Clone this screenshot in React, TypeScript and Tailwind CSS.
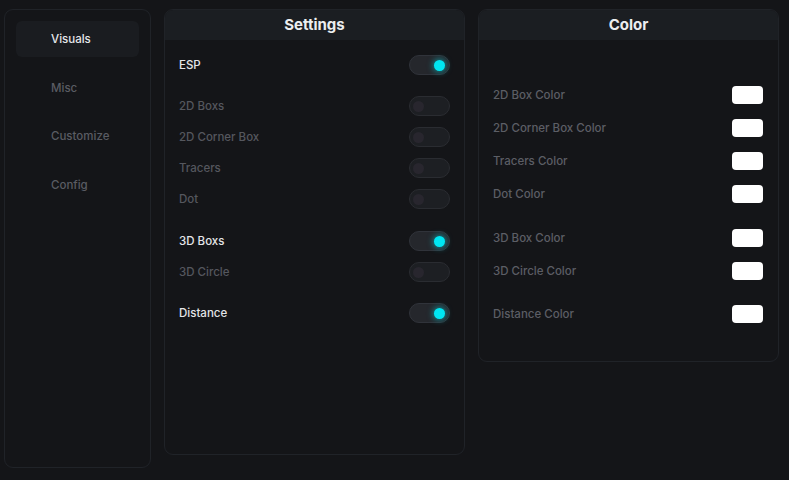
import React from "react";

const font = { fontFamily: "Inter, 'Noto Sans', sans-serif" };

function Toggle({ on }: { on: boolean }) {
  return (
    <div
      className={
        "relative w-[41px] h-[20px] rounded-full border " +
        (on ? "bg-[#25272c] border-[#30333a]" : "bg-[#1d1f23] border-[#2a2c31]")
      }
    >
      {on ? (
        <div className="absolute right-[4px] top-[4px] w-[11px] h-[11px] rounded-full bg-[#00e6f2] shadow-[0_0_6px_1px_rgba(0,230,242,0.55)]" />
      ) : (
        <div className="absolute left-[3px] top-[4px] w-[11px] h-[11px] rounded-full bg-[#28262e]" />
      )}
    </div>
  );
}

function SRow({ label, on }: { label: string; on: boolean }) {
  return (
    <div className="flex items-center justify-between h-[31px]">
      <span className={"text-[11.5px] font-medium leading-none pt-[2px] " + (on ? "text-[#e4e5e8]" : "text-[#55575e]")}>{label}</span>
      <Toggle on={on} />
    </div>
  );
}

function CRow({ label }: { label: string }) {
  return (
    <div className="flex items-center justify-between h-[33px]">
      <span className="text-[11.5px] font-medium leading-none pt-[2px] text-[#5c5e65]">{label}</span>
      <div className="w-[31px] h-[18px] rounded-[4px] bg-white" />
    </div>
  );
}

export default function App() {
  return (
    <div className="w-[789px] h-[480px] bg-[#141518] overflow-hidden" style={font}>
      <div className="flex items-start gap-[13px] pt-[9px] pl-[4px]">
        {/* Sidebar */}
        <div className="w-[147px] h-[459px] rounded-[9px] border border-[#202328] bg-[#141518] p-[11px] flex flex-col gap-[12.5px]">
          {[
            { l: "Visuals", a: true },
            { l: "Misc", a: false },
            { l: "Customize", a: false },
            { l: "Config", a: false },
          ].map((it) => (
            <div
              key={it.l}
              className={
                "h-[36px] rounded-[6px] flex items-center pl-[35px] pt-[2px] text-[11.5px] font-medium " +
                (it.a ? "bg-[#1a1c20] text-[#e6e7ea]" : "text-[#5a5c63]")
              }
            >
              {it.l}
            </div>
          ))}
        </div>

        {/* Settings */}
        <div className="w-[301px] h-[446px] rounded-[9px] border border-[#202328] bg-[#141518] overflow-hidden">
          <div className="h-[30px] bg-[#1b1e22] flex items-center justify-center text-[15px] font-bold text-[#eceef0]">
            Settings
          </div>
          <div className="px-[14px] pt-[9px]">
            <SRow label="ESP" on />
            <div className="mt-[10px]">
              <SRow label="2D Boxs" on={false} />
              <SRow label="2D Corner Box" on={false} />
              <SRow label="Tracers" on={false} />
              <SRow label="Dot" on={false} />
            </div>
            <div className="mt-[11px]">
              <SRow label="3D Boxs" on />
              <SRow label="3D Circle" on={false} />
            </div>
            <div className="mt-[10px]">
              <SRow label="Distance" on />
            </div>
          </div>
        </div>

        {/* Color */}
        <div className="w-[301px] h-[353px] rounded-[9px] border border-[#202328] bg-[#141518] overflow-hidden">
          <div className="h-[30px] bg-[#1b1e22] flex items-center justify-center text-[15px] font-bold text-[#eceef0]">
            Color
          </div>
          <div className="pl-[14px] pr-[15px] pt-[38px]">
            <CRow label="2D Box Color" />
            <CRow label="2D Corner Box Color" />
            <CRow label="Tracers Color" />
            <CRow label="Dot Color" />
            <div className="mt-[11px]">
              <CRow label="3D Box Color" />
              <CRow label="3D Circle Color" />
            </div>
            <div className="mt-[10px]">
              <CRow label="Distance Color" />
            </div>
          </div>
        </div>
      </div>
    </div>
  );
}
